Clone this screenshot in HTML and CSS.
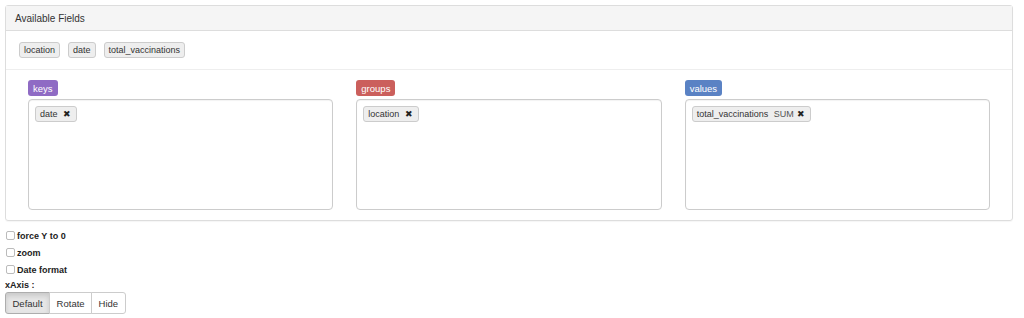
FILE: index.html
```html
<!DOCTYPE html>
<html lang="en">
<head>
    <meta charset="UTF-8">
    <title>Pivot fields</title>
    <link rel="stylesheet" href="styles.css">
</head>
<body>
    <div class="panel">
        <div class="panel-heading">Available Fields</div>
        <div class="fields">
            <span class="chip">location</span>
            <span class="chip">date</span>
            <span class="chip">total_vaccinations</span>
        </div>
        <div class="zones">
            <div class="zone">
                <span class="zone-label keys">keys</span>
                <div class="drop">
                    <span class="chip">date <span class="remove">&#10006;</span></span>
                </div>
            </div>
            <div class="zone">
                <span class="zone-label groups">groups</span>
                <div class="drop">
                    <span class="chip">location <span class="remove">&#10006;</span></span>
                </div>
            </div>
            <div class="zone">
                <span class="zone-label values">values</span>
                <div class="drop">
                    <span class="chip">total_vaccinations <span class="agg">SUM</span> <span class="remove">&#10006;</span></span>
                </div>
            </div>
        </div>
    </div>

    <div class="options">
        <label class="check"><span class="box"></span>force Y to 0</label>
        <label class="check"><span class="box"></span>zoom</label>
        <label class="check"><span class="box"></span>Date format</label>
        <div class="axis-title">xAxis :</div>
        <div class="btn-group">
            <button class="btn active">Default</button>
            <button class="btn">Rotate</button>
            <button class="btn">Hide</button>
        </div>
    </div>
</body>
</html>
```

FILE: styles.css
```css
body {
    margin: 5px;
    font-family: "Liberation Sans", Arial, sans-serif;
    font-size: 9px;
    color: #333;
    background: #fff;
}

.panel {
    width: 1006px;
    border: 1px solid #ddd;
    border-radius: 3px;
    box-shadow: 0 1px 1px rgba(0, 0, 0, 0.04);
}

.panel-heading {
    height: 24px;
    line-height: 25px;
    padding: 0 9px;
    background: #f5f5f5;
    border-bottom: 1px solid #ddd;
    font-size: 10px;
    color: #333;
}

.fields {
    display: flex;
    gap: 8px;
    padding: 11px 13px 11px;
    border-bottom: 1px solid #eee;
}

.chip {
    display: inline-flex;
    align-items: center;
    height: 16px;
    padding: 0 4px;
    background: #eee;
    border: 1px solid #ccc;
    border-radius: 3px;
    box-sizing: border-box;
    font-size: 9px;
    color: #333;
    white-space: pre;
}

.agg {
    color: #555;
    margin-left: 3px;
}

.remove {
    font-size: 8.5px;
    margin-left: 3px;
    margin-right: 1px;
    color: #222;
}

.zones {
    display: grid;
    grid-template-columns: repeat(3, 1fr);
    gap: 23px;
    padding: 10px 22px 10px;
}

.zone {
    display: flex;
    flex-direction: column;
    align-items: flex-start;
}

.zone-label {
    height: 16px;
    line-height: 17px;
    padding: 0 5px;
    border-radius: 3px;
    color: #fff;
    font-size: 9.5px;
    margin-bottom: 3px;
}

.keys {
    background: #8f6bc4;
}

.groups {
    background: #cb5f5c;
}

.values {
    background: #5a82c4;
}

.drop {
    align-self: stretch;
    height: 111px;
    box-sizing: border-box;
    border: 1px solid #ccc;
    border-radius: 4px;
    padding: 6px;
    box-shadow: inset 0 1px 1px rgba(0, 0, 0, 0.05);
}

.options {
    padding-top: 6px;
}

.check {
    display: flex;
    align-items: center;
    height: 17px;
    font-weight: bold;
    font-size: 9px;
    color: #222;
}

.box {
    width: 7px;
    height: 7px;
    border: 1px solid #bbb;
    border-radius: 2px;
    margin: 0 2px 0 1px;
    background: #fff;
}

.axis-title {
    font-weight: bold;
    font-size: 9px;
    color: #222;
    height: 14px;
    line-height: 14px;
}

.btn-group {
    display: flex;
}

.btn {
    height: 22px;
    padding: 0 6.5px;
    font-family: inherit;
    font-size: 9.5px;
    color: #333;
    background: #fff;
    border: 1px solid #ccc;
    margin-left: -1px;
}

.btn:first-child {
    margin-left: 0;
    border-radius: 3px 0 0 3px;
}

.btn:last-child {
    border-radius: 0 3px 3px 0;
}

.btn.active {
    background: #e6e6e6;
    box-shadow: inset 0 3px 5px rgba(0, 0, 0, 0.125);
    border-color: #adadad;
}
```
